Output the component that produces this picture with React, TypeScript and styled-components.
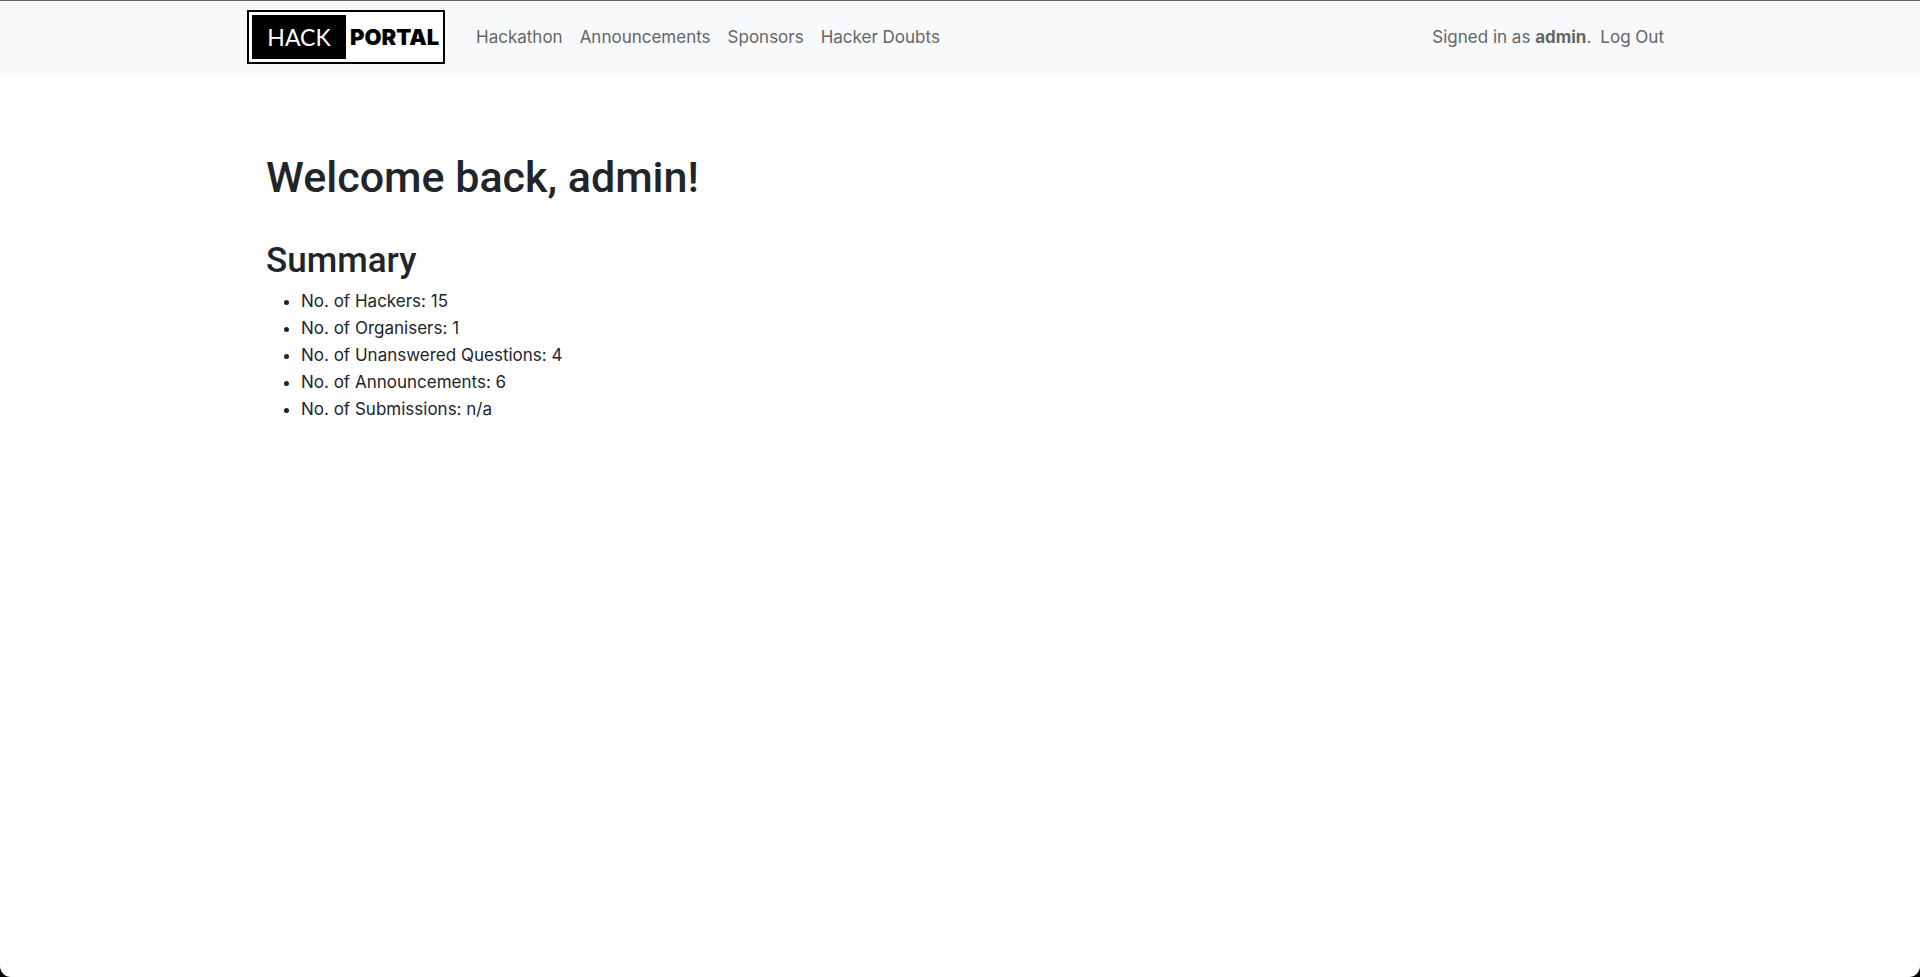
import React from "react";
import styled, { createGlobalStyle } from "styled-components";

const GlobalStyle = createGlobalStyle`
  *, *::before, *::after { box-sizing: border-box; }
  html { background: #000; }
  body {
    margin: 0;
    font-family: Inter, "Liberation Sans", sans-serif;
    font-size: 17px;
    line-height: 27px;
    color: #212529;
  }
`;

const Page = styled.div`
  min-height: 100vh;
  overflow: hidden;
  background: #fff;
  border-radius: 0 0 11px 11px;
`;

const Navbar = styled.header`
  background: #f8f9fb;
  border-top: 1px solid #636367;
  padding: 9px 0;
`;

const NavContainer = styled.div`
  max-width: 1452px;
  margin: 0 auto;
  padding: 0 22px 0 13px;
  display: flex;
  align-items: center;
`;

const Brand = styled.a`
  display: flex;
  width: 198px;
  height: 54px;
  padding: 4px;
  margin-right: 31px;
  border: 1px solid #000;
  outline: 1px solid #000;
  outline-offset: -2px;
  background: #fff;
  color: #000;
  text-decoration: none;
  line-height: 44px;
`;

const BrandDark = styled.span`
  width: 94px;
  background: #000;
  color: #fff;
  text-align: center;
  font-family: Lato, sans-serif;
  font-size: 23px;
  font-weight: 400;
`;

const BrandLight = styled.span`
  flex: 1;
  padding-left: 4px;
  font-size: 22px;
  font-weight: 900;
`;

const NavLinks = styled.nav`
  display: flex;
  flex: 1;
  gap: 17px;
`;

const NavLink = styled.a`
  padding: 9px 0;
  color: #646566;
  text-decoration: none;
`;

const Account = styled.div`
  display: flex;
  align-items: center;
  gap: 9px;
  color: #646566;
`;

const Main = styled.main`
  max-width: 1452px;
  margin: 0 auto;
  padding: 78px 32px 0;
`;

const Title = styled.h1`
  margin: 0 0 36px;
  font-family: Roboto, sans-serif;
  font-size: 43px;
  line-height: 53px;
  font-weight: 500;
`;

const Subtitle = styled.h2`
  margin: 0 0 6px;
  font-family: Roboto, sans-serif;
  font-size: 35px;
  line-height: 42px;
  font-weight: 500;
`;

const SummaryList = styled.ul`
  margin: 0;
  padding-left: 35px;
`;

const links = ["Hackathon", "Announcements", "Sponsors", "Hacker Doubts"];

const summary = [
  ["Hackers", "15"],
  ["Organisers", "1"],
  ["Unanswered Questions", "4"],
  ["Announcements", "6"],
  ["Submissions", "n/a"],
];

export default function App() {
  return (
    <>
      <GlobalStyle />
      <Page>
        <Navbar>
          <NavContainer>
            <Brand href="#" aria-label="Hack Portal">
              <BrandDark>HACK</BrandDark>
              <BrandLight>PORTAL</BrandLight>
            </Brand>
            <NavLinks>
              {links.map((label) => (
                <NavLink href="#" key={label}>{label}</NavLink>
              ))}
            </NavLinks>
            <Account>
              <span>Signed in as <strong>admin</strong>.</span>
              <NavLink href="#">Log Out</NavLink>
            </Account>
          </NavContainer>
        </Navbar>
        <Main>
          <Title>Welcome back, admin!</Title>
          <Subtitle>Summary</Subtitle>
          <SummaryList>
            {summary.map(([label, value]) => (
              <li key={label}>No. of {label}: {value}</li>
            ))}
          </SummaryList>
        </Main>
      </Page>
    </>
  );
}
